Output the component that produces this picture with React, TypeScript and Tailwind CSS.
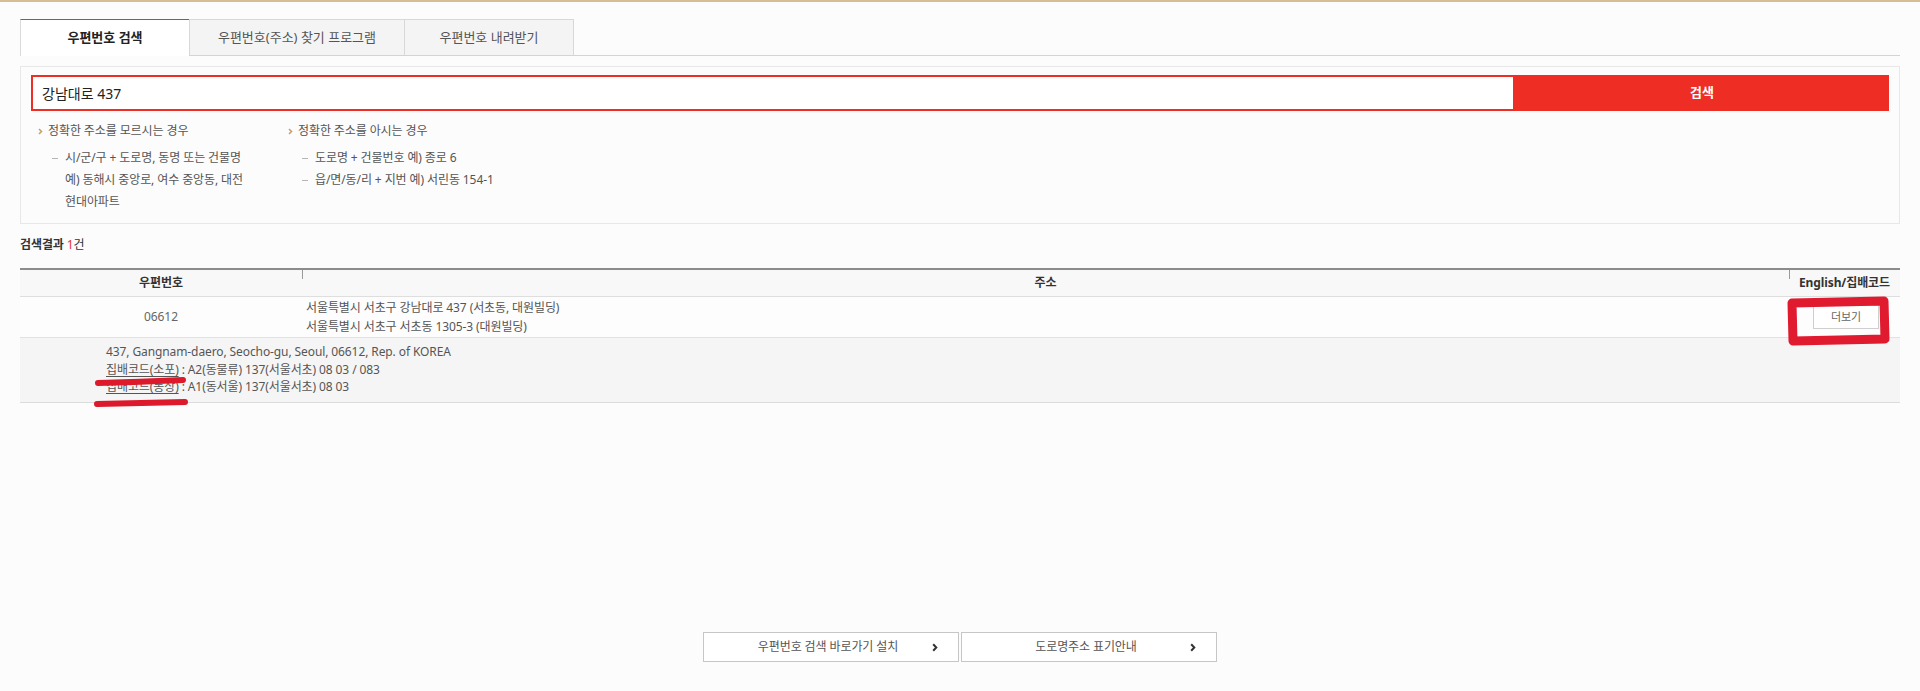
import { ReactNode } from "react";

function HintArrow() {
  return (
    <svg width="5" height="7" viewBox="0 0 5 7" className="shrink-0">
      <polyline points="1,1 3.5,3.5 1,6" fill="none" stroke="#c9a06c" strokeWidth="1.6" />
    </svg>
  );
}

function HintBlock({ title, lines }: { title: string; lines: ReactNode[] }) {
  return (
    <div className="flex flex-col">
      <div className="flex h-[22px] items-center gap-[5px]">
        <HintArrow />
        <span>{title}</span>
      </div>
      <div className="mt-[5px] flex flex-col">
        {lines.map((line, i) => (
          <div key={i} className="flex leading-[22px]">
            <span className="ml-[14px] mr-[7px] mt-[11px] h-px w-[6px] shrink-0 bg-[#b5b5b5]"></span>
            <div>{line}</div>
          </div>
        ))}
      </div>
    </div>
  );
}

function LinkButton({ label }: { label: string }) {
  return (
    <button className="flex h-[30px] w-[256px] items-center border border-[#c6c6c6] bg-white pl-[20px] pr-[20px] text-[#555]">
      <span className="flex-1 text-center">{label}</span>
      <svg width="6" height="9" viewBox="0 0 6 9">
        <polyline points="1.2,1.2 4.3,4.5 1.2,7.8" fill="none" stroke="#333" strokeWidth="2" />
      </svg>
    </button>
  );
}

export default function App() {
  return (
    <div className="min-h-[691px] border-t-2 border-[#d6bd95] bg-[#fcfcfc] font-['Noto_Sans','Noto_Sans_CJK_KR',sans-serif] text-[12px] tracking-[-0.1px] text-[#555]">
      <div className="px-5 pt-[17px]">
        {/* tabs */}
        <div className="flex h-[37px] items-start border-b border-[#d4d4d4]">
          <div className="-mb-px flex h-[37px] w-[169px] items-center justify-center border-l border-t border-l-[#dadada] border-t-[#e5322a] bg-white text-[13px] font-bold tracking-normal text-[#222]">
            우편번호 검색
          </div>
          <div className="flex h-[36px] w-[215px] items-center justify-center border-l border-t border-[#d8d8d8] bg-[#f4f4f4] text-[13px] tracking-normal text-[#555]">
            우편번호(주소) 찾기 프로그램
          </div>
          <div className="flex h-[36px] w-[170px] items-center justify-center border-x border-t border-[#d8d8d8] bg-[#f4f4f4] text-[13px] tracking-normal text-[#555]">
            우편번호 내려받기
          </div>
        </div>

        {/* search box */}
        <div className="mt-[10px] border border-[#e8e8e8] px-[10px] pb-[10px] pt-[8px]">
          <div className="flex h-[36px]">
            <div className="flex flex-1 items-center border-2 border-[#ee2e24] bg-white pl-[9px] text-[14px] tracking-normal text-[#222]">
              강남대로 437
            </div>
            <button className="w-[374px] bg-[#ee2e24] text-[13px] font-bold tracking-normal text-white">
              검색
            </button>
          </div>
          <div className="mt-[9px] flex pl-[7px]">
            <div className="w-[250px]">
              <HintBlock
                title="정확한 주소를 모르시는 경우"
                lines={[
                  <>
                    시/군/구 + 도로명, 동명 또는 건물명
                    <br />
                    예) 동해시 중앙로, 여수 중앙동, 대전
                    <br />
                    현대아파트
                  </>,
                ]}
              />
            </div>
            <div>
              <HintBlock
                title="정확한 주소를 아시는 경우"
                lines={["도로명 + 건물번호 예) 종로 6", "읍/면/동/리 + 지번 예) 서린동 154-1"]}
              />
            </div>
          </div>
        </div>

        {/* results */}
        <div className="mt-[12px] leading-[18px] font-bold text-[#333]">
          검색결과 <span className="font-normal text-[#e5322a]">1</span>
          <span className="font-normal">건</span>
        </div>

        <div className="relative mt-[14px] border-t-2 border-[#8c8c8c]">
          <div className="grid h-[27px] grid-cols-[282px_1fr_111px] border-b border-[#dedede] bg-[#f8f8f8] font-bold text-[#333]">
            <div className="flex items-center justify-center">우편번호</div>
            <div className="relative flex items-center justify-center">
              <span className="absolute left-0 top-0 h-[9px] w-px bg-[#9a9a9a]"></span>
              주소
            </div>
            <div className="relative flex items-center justify-center">
              <span className="absolute left-0 top-0 h-[9px] w-px bg-[#9a9a9a]"></span>
              English/집배코드
            </div>
          </div>

          <div className="grid h-[41px] grid-cols-[282px_1fr_111px] border-b border-[#e2e2e2] bg-[#fdfdfd]">
            <div className="flex items-center justify-center text-[#666]">06612</div>
            <div className="flex flex-col justify-center pl-[4px] leading-[19px]">
              <span>서울특별시 서초구 강남대로 437 (서초동, 대원빌딩)</span>
              <span>서울특별시 서초구 서초동 1305-3 (대원빌딩)</span>
            </div>
            <div className="flex items-center justify-end pr-[21px]">
              <button className="h-[24px] w-[66px] border border-[#cfcfcf] bg-white text-[11px] text-[#666]">
                더보기
              </button>
            </div>
          </div>

          <div className="flex h-[65px] flex-col border-b border-[#dcdcdc] bg-[#f5f5f5] pl-[86px] pt-[5px] leading-[17.5px]">
            <span>437, Gangnam-daero, Seocho-gu, Seoul, 06612, Rep. of KOREA</span>
            <span>
              <span className="underline underline-offset-2">집배코드(소포)</span> : A2(동물류) 137(서울서초) 08 03 / 083
            </span>
            <span>
              <span className="underline underline-offset-2">집배코드(통상)</span> : A1(동서울) 137(서울서초) 08 03
            </span>
          </div>

          {/* red annotation marks */}
          <svg className="pointer-events-none absolute left-[74px] top-[104px]" width="96" height="36" viewBox="0 0 96 36">
            <path d="M4 9 Q45 8 89 6" fill="none" stroke="#dc1a2c" strokeWidth="6" strokeLinecap="round" />
            <path d="M3 30 Q48 29 91 28" fill="none" stroke="#dc1a2c" strokeWidth="6" strokeLinecap="round" />
          </svg>
          <svg className="pointer-events-none absolute right-[7px] top-[24px]" width="110" height="56" viewBox="0 0 110 56">
            <path d="M9 9 L101 7 L102 45 L10 47 Z" fill="none" stroke="#e01b2f" strokeWidth="9" strokeLinejoin="round" />
          </svg>
        </div>

        {/* bottom links */}
        <div className="mt-[229px] flex justify-center gap-[2px]">
          <LinkButton label="우편번호 검색 바로가기 설치" />
          <LinkButton label="도로명주소 표기안내" />
        </div>
      </div>
    </div>
  );
}
